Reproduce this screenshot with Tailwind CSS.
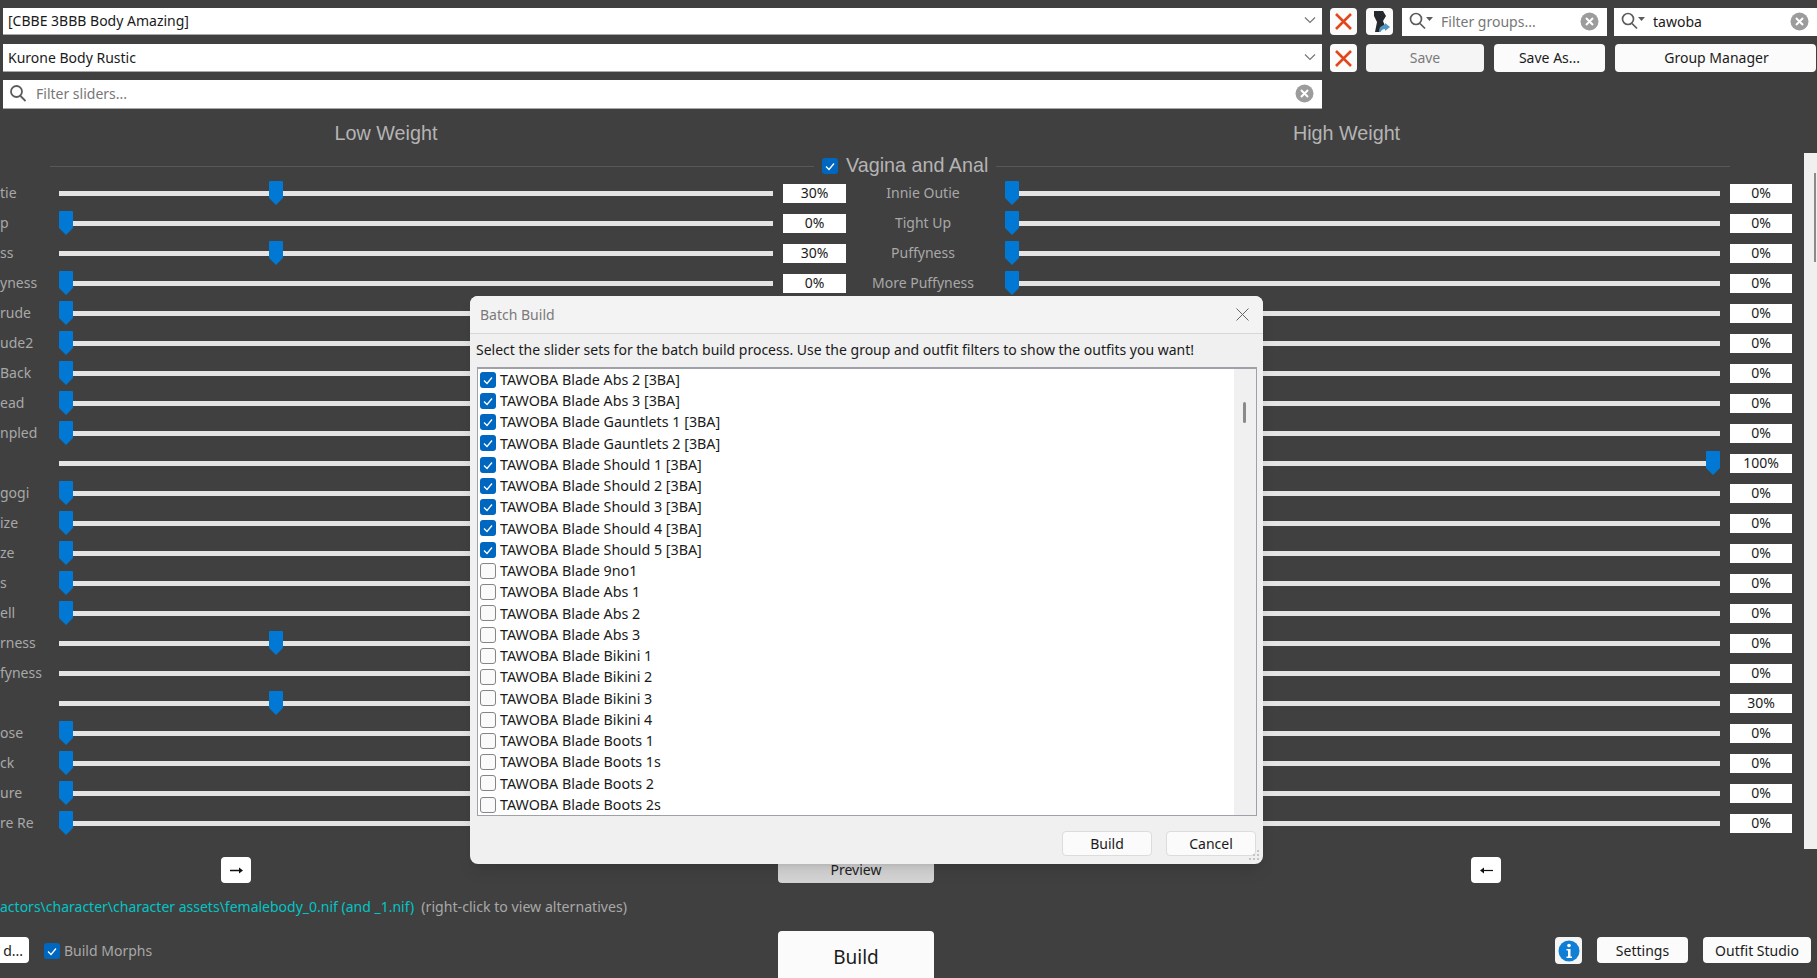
<!DOCTYPE html>
<html lang="en">

<head>
    <meta charset="UTF-8">
    <title>Batch Build</title>
    <script src="https://cdn.jsdelivr.net/npm/@tailwindcss/browser@4"></script>
</head>

<body class="bg-[#404040] overflow-hidden font-['Noto_Sans',sans-serif] text-[14px] text-[#1a1a1a]">
    <div class="relative w-[1817px] h-[978px] overflow-hidden">

        <!-- Top rows -->
        <div class="flex h-[35px] pt-[8px] pl-[3px]">
            <div class="flex items-center justify-between w-[1319px] h-[27px] bg-white px-[5px] pb-[2px] border-b border-[#a8a8a8]">
                <span>[CBBE 3BBB Body Amazing]</span>
                <svg class="w-[12px] h-[8px] mr-[1px]" viewBox="0 0 12 8" fill="none" stroke="#777" stroke-width="1.2"><path d="M1 1.5l5 5 5-5" /></svg>
            </div>
            <button class="flex items-center justify-center w-[27px] h-[27px] ml-[8px] bg-[#fbfbfb] rounded-[4px]">
                <svg class="w-[19px] h-[19px]" viewBox="0 0 19 19" fill="none" stroke="#e0481c" stroke-width="2.6"><path d="M2 2l15 15M17 2L2 17" /></svg>
            </button>
            <button class="flex items-center justify-center w-[27px] h-[27px] ml-[9px] bg-[#fbfbfb] rounded-[4px]">
                <svg class="w-[23px] h-[23px]" viewBox="0 0 23 23">
                    <path fill="#25292e" d="M6 1h9l3 5-3 5 2 5-5 6H7l2-10-3-6z" />
                    <path fill="#4f97c4" d="M11 22c0-5 3-7 6-7v-2l5 4-5 4v-2c-2 0-4 1-5 3z" />
                </svg>
            </button>
            <div class="flex items-center w-[205px] h-[28px] ml-[9px] bg-white pl-[7px] pr-[8px] pb-[2px]">
                <svg class="w-[26px] h-[18px]" viewBox="0 0 26 18" fill="none" stroke="#5c5c5c" stroke-width="1.7"><circle cx="7" cy="7" r="5.500" /><path d="M11 11.500l5 5" /><path fill="#5c5c5c" stroke="none" d="M17 5h7l-3.500 4z" /></svg>
                <span class="ml-[6px] text-[#777]">Filter groups...</span>
                <svg class="w-[19px] h-[19px] ml-auto" viewBox="0 0 19 19"><circle cx="9.500" cy="9.500" r="9" fill="#9c9c9c" /><path d="M6 6l7 7M13 6l-7 7" stroke="#fff" stroke-width="2" /></svg>
            </div>
            <div class="flex items-center w-[203px] h-[28px] ml-[7px] bg-white pl-[7px] pr-[8px] pb-[2px]">
                <svg class="w-[26px] h-[18px]" viewBox="0 0 26 18" fill="none" stroke="#5c5c5c" stroke-width="1.7"><circle cx="7" cy="7" r="5.500" /><path d="M11 11.500l5 5" /><path fill="#5c5c5c" stroke="none" d="M17 5h7l-3.500 4z" /></svg>
                <span class="ml-[6px]">tawoba</span>
                <svg class="w-[19px] h-[19px] ml-auto" viewBox="0 0 19 19"><circle cx="9.500" cy="9.500" r="9" fill="#9c9c9c" /><path d="M6 6l7 7M13 6l-7 7" stroke="#fff" stroke-width="2" /></svg>
            </div>
        </div>

        <div class="flex h-[28px] mt-[9px] pl-[3px]">
            <div class="flex items-center justify-between w-[1319px] bg-white px-[5px] pb-[1px] border-b border-[#a8a8a8]">
                <span>Kurone Body Rustic</span>
                <svg class="w-[12px] h-[8px] mr-[1px]" viewBox="0 0 12 8" fill="none" stroke="#777" stroke-width="1.2"><path d="M1 1.5l5 5 5-5" /></svg>
            </div>
            <button class="flex items-center justify-center w-[27px] ml-[8px] bg-[#fbfbfb] rounded-[4px]">
                <svg class="w-[19px] h-[19px]" viewBox="0 0 19 19" fill="none" stroke="#e0481c" stroke-width="2.6"><path d="M2 2l15 15M17 2L2 17" /></svg>
            </button>
            <button class="w-[118px] ml-[9px] pb-[2px] bg-[#f5f5f5] rounded-[4px] text-[#7a7a7a]">Save</button>
            <button class="w-[111px] ml-[10px] pb-[2px] bg-[#fbfbfb] rounded-[4px]">Save As...</button>
            <button class="w-[201px] ml-[10px] pb-[2px] pl-[2px] bg-[#fbfbfb] rounded-[4px]">Group Manager</button>
        </div>

        <div class="flex items-center w-[1319px] h-[29px] mt-[8px] ml-[3px] bg-white pl-[6px] pr-[8px] pb-[2px] border-b border-[#a8a8a8]">
            <svg class="w-[18px] h-[18px]" viewBox="0 0 18 18" fill="none" stroke="#5c5c5c" stroke-width="1.8"><circle cx="7.500" cy="7.500" r="5.500" /><path d="M11.500 12l5 5" /></svg>
            <span class="ml-[9px] text-[#777]">Filter sliders...</span>
            <svg class="w-[19px] h-[19px] ml-auto" viewBox="0 0 19 19"><circle cx="9.500" cy="9.500" r="9" fill="#9c9c9c" /><path d="M6 6l7 7M13 6l-7 7" stroke="#fff" stroke-width="2" /></svg>
        </div>

        <!-- Weight headings -->
        <div class="flex h-[40px] mt-[5px] items-center font-['Liberation_Sans',sans-serif] text-[19.750px] text-[#b4b4b4]">
            <span class="w-[772px] text-center">Low Weight</span>
            <span class="w-[1045px] pl-[104px] text-center">High Weight</span>
        </div>

        <!-- Section header -->
        <div class="flex items-center h-[24px] ml-[50px] w-[1680px]">
            <div class="h-px w-[764px] bg-[#585858]"></div>
            <svg class="w-[16px] h-[16px] ml-[8px] shrink-0" viewBox="0 0 16 16"><rect width="16" height="16" rx="3" fill="#0067c0" /><path d="M4 8.500l3 3 5-6" fill="none" stroke="#fff" stroke-width="1.300" /></svg>
            <span class="mx-[8px] font-['Liberation_Sans',sans-serif] text-[19.750px] text-[#b4b4b4] whitespace-nowrap">Vagina and Anal</span>
            <div class="h-px flex-1 bg-[#585858]"></div>
        </div>

        <!-- Slider rows -->
        <div id="sliders"></div>

        <!-- Arrows and preview -->
        <div class="flex h-[26px] mt-[19px]">
            <button class="flex items-center justify-center w-[30px] ml-[221px] bg-white rounded-[4px]">
                <svg class="w-[13px] h-[7px]" viewBox="0 0 13 7"><path d="M0 3.500h10" stroke="#111" stroke-width="1.500" /><path d="M9 .5l4 3-4 3z" fill="#111" /></svg>
            </button>
            <button class="w-[156px] ml-[527px] pb-[1px] bg-[#d4d4d4] rounded-[4px] text-[#222]">Preview</button>
            <button class="flex items-center justify-center w-[30px] ml-[537px] bg-white rounded-[4px]">
                <svg class="w-[13px] h-[7px]" viewBox="0 0 13 7"><path d="M3 3.500h10" stroke="#111" stroke-width="1.200" /><path d="M4 .5l-4 3 4 3z" fill="#111" /></svg>
            </button>
        </div>

        <!-- Reference path -->
        <div class="flex items-center h-[20px] mt-[14px] pb-[1px] whitespace-nowrap">
            <span class="text-[#00c5c5]">actors\character\character assets\femalebody_0.nif (and _1.nif)</span>
            <span class="ml-[7px] text-[#a8a8a8] text-[14.150px]">(right-click to view alternatives)</span>
        </div>

        <!-- Bottom bar -->
        <div class="flex items-start h-[47px] mt-[14px]">
            <button class="w-[29px] h-[26px] mt-[6px] bg-white rounded-r-[4px] text-right pr-[6px]">d...</button>
            <svg class="w-[16px] h-[16px] mt-[12px] ml-[15px]" viewBox="0 0 16 16"><rect width="16" height="16" rx="3" fill="#0067c0" /><path d="M4 8.500l3 3 5-6" fill="none" stroke="#fff" stroke-width="1.300" /></svg>
            <span class="ml-[4px] mt-[9px] text-[#a8a8a8]">Build Morphs</span>
            <button class="absolute left-[778px] w-[156px] h-[47px] bg-[#fbfbfb] rounded-t-[4px] text-[19px] pt-[5px]">Build</button>
            <button class="flex items-center justify-center w-[27px] h-[27px] mt-[6px] ml-auto bg-[#f5f5f5] rounded-[4px]">
                <svg class="w-[22px] h-[22px]" viewBox="0 0 22 22"><circle cx="11" cy="11" r="10.500" fill="#0f7fd6" /><circle cx="11" cy="5.500" r="1.800" fill="#fff" /><path d="M8.500 9h4v7.500h1.500v1.500H8.500v-1.500H10V10.500H8.500z" fill="#fff" /></svg>
            </button>
            <button class="w-[91px] h-[26px] mt-[6px] ml-[15px] bg-[#fbfbfb] rounded-[4px]">Settings</button>
            <button class="w-[108px] h-[26px] mt-[6px] ml-[15px] mr-[6px] bg-[#fbfbfb] rounded-[4px]">Outfit Studio</button>
        </div>

        <!-- Scrollbar of the slider panel -->
        <div class="absolute left-[1804px] top-[153px] w-[13px] h-[696px] bg-[#f0f0f0]">
            <div class="absolute right-[1px] top-[20px] w-[2px] h-[89px] bg-[#8a8a8a]"></div>
        </div>

        <!-- Batch Build dialog -->
        <div class="absolute left-[470px] top-[296px] flex flex-col w-[793px] h-[568px] bg-[#f0f0f0] rounded-[8px] shadow-lg">
            <div class="flex items-center justify-between h-[38px] shrink-0 px-[10px] bg-[#f3f3f3] border-b border-[#d8d8d8] rounded-t-[8px] text-[#7a7a7a]">
                <span>Batch Build</span>
                <svg class="w-[13px] h-[13px] mr-[4px]" viewBox="0 0 13 13" fill="none" stroke="#666" stroke-width="1"><path d="M.5.500l12 12M12.500.500l-12 12" /></svg>
            </div>
            <p class="h-[33px] shrink-0 pl-[6px] leading-[32px] whitespace-nowrap">Select the slider sets for the batch build process. Use the group and outfit filters to show the outfits you want!</p>
            <div class="relative w-[780px] h-[449px] ml-[7px] bg-white border border-[#a0a0a8] border-t-2">
                <ul id="outfits" class="pl-[2px] h-full overflow-hidden text-[14.300px]"></ul>
                <div class="absolute right-0 top-0 w-[22px] h-full bg-[#f0f0f0]">
                    <div class="absolute left-[9px] top-[33px] w-[3px] h-[21px] bg-[#8a8a8a] rounded-full"></div>
                </div>
            </div>
            <div class="flex justify-end gap-[14px] mt-[15px] mr-[7px]">
                <button class="w-[90px] h-[25px] bg-[#fbfbfb] rounded-[4px] border border-[#dcdcdc]">Build</button>
                <button class="w-[90px] h-[25px] bg-[#fbfbfb] rounded-[4px] border border-[#dcdcdc]">Cancel</button>
            </div>
            <!-- resize grip -->
            <svg class="absolute right-[3px] bottom-[3px] w-[12px] h-[12px]" viewBox="0 0 12 12" fill="#c4c4c4"><rect x="9" y="1" width="2" height="2" /><rect x="9" y="5" width="2" height="2" /><rect x="5" y="5" width="2" height="2" /><rect x="9" y="9" width="2" height="2" /><rect x="5" y="9" width="2" height="2" /><rect x="1" y="9" width="2" height="2" /></svg>
        </div>
    </div>

    <script>
        // low %, high %, left label (clipped by the scrolled panel), middle label
        const rows = [
            [30, 0, "tie", "Innie Outie"], [0, 0, "p", "Tight Up"], [30, 0, "ss", "Puffyness"], [0, 0, "yness", "More Puffyness"],
            [0, 0, "rude", ""], [0, 0, "ude2", ""], [0, 0, "Back", ""], [0, 0, "ead", ""], [0, 0, "npled", ""], [100, 100, "", ""],
            [0, 0, "gogi", ""], [0, 0, "ize", ""], [0, 0, "ze", ""], [0, 0, "s", ""], [0, 0, "ell", ""], [30, 0, "rness", ""],
            [100, 0, "fyness", ""], [30, 30, "", ""], [0, 0, "ose", ""], [0, 0, "ck", ""], [0, 0, "ure", ""], [0, 0, "re Re", ""]
        ];

        const thumb = (pct, travel) => `<svg class="absolute top-[-10px] w-[14px] h-[24px]" style="left:${pct * travel / 100}px" viewBox="0 0 14 24"><path fill="#0078d4" d="M1 0h12a1 1 0 011 1v16l-7 7-7-7V1a1 1 0 011-1z"/></svg>`;

        // rows without a middle label sit behind the dialog, so their left value is never seen
        document.getElementById("sliders").innerHTML = rows.map(([low, high, name, mid]) => `
            <div class="flex items-center h-[30px] text-[#a8a8a8]">
                <span class="w-[59px] pb-[1px] whitespace-nowrap overflow-hidden">${name}</span>
                <div class="relative w-[714px] h-[5px] bg-[#e4e4e4]">${thumb(low, 700)}</div>
                <div class="w-[63px] h-[19px] ml-[10px] bg-white text-center text-[#1a1a1a] leading-[18px]">${mid && low + "%"}</div>
                <span class="w-[154px] pb-[1px] text-center">${mid}</span>
                <div class="relative w-[715px] h-[5px] ml-[5px] bg-[#e4e4e4]">${thumb(high, 701)}</div>
                <div class="w-[62px] h-[19px] ml-[10px] bg-white text-center text-[#1a1a1a] leading-[18px]">${high}%</div>
            </div>`).join("");

        const checked = ["Abs 2 [3BA]", "Abs 3 [3BA]", "Gauntlets 1 [3BA]", "Gauntlets 2 [3BA]", "Should 1 [3BA]", "Should 2 [3BA]", "Should 3 [3BA]", "Should 4 [3BA]", "Should 5 [3BA]"];
        const unchecked = ["9no1", "Abs 1", "Abs 2", "Abs 3", "Bikini 1", "Bikini 2", "Bikini 3", "Bikini 4", "Boots 1", "Boots 1s", "Boots 2", "Boots 2s"];

        const onBox = `<svg class="w-[16px] h-[16px] shrink-0" viewBox="0 0 16 16"><rect width="16" height="16" rx="3" fill="#0067c0"/><path d="M4 8.500l3 3 5-6" fill="none" stroke="#fff" stroke-width="1.300"/></svg>`;
        const offBox = `<span class="w-[16px] h-[16px] shrink-0 bg-[#fafafa] border border-[#858585] rounded-[3px]"></span>`;
        const item = (box, name) => `<li class="flex items-center gap-[4px] h-[21.25px] whitespace-nowrap">${box}<span>TAWOBA Blade ${name}</span></li>`;

        document.getElementById("outfits").innerHTML =
            checked.map(n => item(onBox, n)).join("") + unchecked.map(n => item(offBox, n)).join("");
    </script>
</body>

</html>
